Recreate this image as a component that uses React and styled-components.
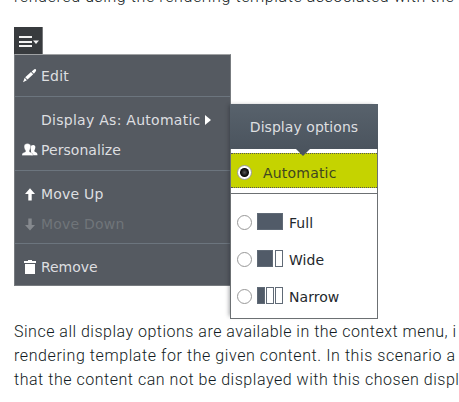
import React from "react";
import styled, { createGlobalStyle } from "styled-components";

const GlobalStyle = createGlobalStyle`
  html, body { margin: 0; background: #fff; overflow: hidden; }
  * { box-sizing: border-box; }
`;

const Page = styled.main`
  width: 459px;
  height: 402px;
  padding-left: 14px;
  overflow: hidden;
  background: #fff;
`;

const Paragraph = styled.div`
  height: ${(p) => p.$height}px;
  margin-top: ${(p) => p.$offset}px;
  padding-top: ${(p) => p.$top || 0}px;
  color: #111a22;
  font: 300 16px/24px Roboto, sans-serif;
`;

const Line = styled.div`
  height: 24px;
  white-space: nowrap;
  letter-spacing: ${(p) => p.$spacing}px;
`;

const Toggle = styled.button`
  display: flex;
  align-items: center;
  gap: 1px;
  width: 29px;
  height: 27px;
  margin: 0;
  padding: 2px 0 0 5px;
  border: 0;
  border-right: 1px solid #77797b;
  background: #383b3e;
`;

const MenuArea = styled.div`
  position: relative;
  width: 217px;
  height: 265px;
`;

const Menu = styled.nav`
  width: 217px;
  height: 232px;
  border: 1px solid #777b7f;
  border-top-color: #a0a2a4;
  background: #555a61;
  font: 14px/30px "DejaVu Sans", sans-serif;
`;

const Group = styled.div`
  height: ${(p) => p.$height}px;
  padding-top: ${(p) => p.$top}px;
  border-bottom: ${(p) => (p.$last ? "0" : "1px solid #6c757e")};
`;

const MenuItem = styled.div`
  display: flex;
  align-items: center;
  height: 30px;
  color: ${(p) => (p.$disabled ? "#70757a" : "#dedfe0")};
  white-space: nowrap;
  letter-spacing: ${(p) => p.$spacing ?? 0.2}px;
`;

const IconSlot = styled.span`
  display: flex;
  align-items: center;
  justify-content: center;
  width: 16px;
  height: 16px;
  margin: 0 3px 0 7px;
  color: ${(p) => (p.$disabled ? "#85898e" : "#fff")};
`;

const Submenu = styled.section`
  position: absolute;
  left: 216px;
  top: 50px;
  width: 148px;
  height: 215px;
  border: 1px solid #6c7073;
  background: #fff;
  box-shadow: -3px -1px 4px -2px rgba(25, 31, 38, 0.4);
  font: 14px/18px "DejaVu Sans", sans-serif;
`;

const SubmenuTitle = styled.header`
  position: relative;
  height: 45px;
  margin: -1px -1px 0;
  background: linear-gradient(#58626c, #4b545e);
  color: #dedfe0;
  line-height: 47px;
  text-align: center;
  letter-spacing: 0.05px;
`;

const Pointer = styled.svg`
  position: absolute;
  z-index: 1;
  left: 66px;
  top: 45px;
`;

const Option = styled.label`
  display: flex;
  align-items: center;
  height: 37px;
  padding-left: 6px;
  color: #24282d;
`;

const SelectedOption = styled(Option)`
  height: 35px;
  margin-top: 4px;
  border: 1px dotted #555;
  border-width: 1px 0;
  background: #c5d300;
  padding-top: 5px;
  color: #3f4720;
`;

const Radio = styled.span`
  display: flex;
  align-items: center;
  justify-content: center;
  width: 15px;
  height: 15px;
  margin-top: ${(p) => (p.$checked ? -2 : 0)}px;
  border: 1px solid #989898;
  border-radius: 50%;
  background: #fff;
  flex: none;
  &::after {
    content: "";
    width: 9px;
    height: 9px;
    border-radius: 50%;
    background: ${(p) => (p.$checked ? "radial-gradient(#555, #000 65%)" : "transparent")};
  }
`;

const OptionText = styled.span`
  margin-left: ${(p) => p.$gap}px;
  white-space: nowrap;
  letter-spacing: ${(p) => p.$spacing ?? 0.05}px;
`;

const Choices = styled.div`
  margin-top: 5px;
  padding-top: 10px;
  border-top: 1px solid #6c7073;
`;

const WidthIcon = styled.span`
  display: flex;
  justify-content: space-between;
  width: 26px;
  height: 17px;
  margin: -2px 0 0 5px;
`;

const WidthBlock = styled.span`
  width: ${(p) => p.$width}px;
  border: 1px solid #606a76;
  background: ${(p) => (p.$filled ? "#515b68" : "#fff")};
`;

const HamburgerIcon = () => (
  <>
    <svg width="13" height="13" viewBox="0 0 13 13" fill="#f3f3f3">
      <path d="M0 1h13v2H0zM0 6h13v2H0zM0 10h13v2H0z" />
    </svg>
    <svg width="6" height="4" viewBox="0 0 6 4" fill="#f3f3f3"><path d="M0 .5h6L3 4z" /></svg>
  </>
);

const Icon = ({ kind, disabled }) => (
  <IconSlot $disabled={disabled}>
    {kind === "edit" && (
      <svg width="16" height="16" viewBox="0 0 16 16" fill="currentColor">
        <path d="M3.2 9.2 9 4l2.2 2.3-5.7 5.2zM2.7 9.8 4.9 12.2 1 14.3zM9.7 3.4 12.3 1.2Q13.5.6 14 1.5 14.4 2.2 13.8 3.2L11.9 5.7z" />
      </svg>
    )}
    {kind === "people" && (
      <svg width="16" height="14" viewBox="0 0 16 14" fill="currentColor">
        <path d="M8.5 4.4C8.7 2.8 9.8 2 11.2 2s2.4 1 2.1 2.8c-.2 1.2-.5 2-.9 2.5v1.3l2.3 1.1q.8.5.8 2.5H9V8z" />
        <path d="M2.1 4C2 1.7 3.3.6 5.4.6s3.7 1.2 3.3 3.5c-.2 1.5-.8 2.6-1.2 3.3v1.4l2.6 1.3q1 .5 1 2.4H0q-.2-2 .8-2.4l2.7-1.3V7.4C2.8 6.7 2.3 5.5 2.1 4z" stroke="#555a61" strokeWidth=".3" />
      </svg>
    )}
    {(kind === "up" || kind === "down") && (
      <svg width="12" height="13" viewBox="0 0 12 13" fill="currentColor">
        <path d={kind === "up" ? "M6 .3 11 6H7.7v6.5H4.3V6H1z" : "M6 12.5 11 7H7.7V.5H4.3V7H1z"} />
      </svg>
    )}
    {kind === "trash" && (
      <svg width="14" height="16" viewBox="0 0 14 16" fill="currentColor">
        <path d="M5 1h4v1h4v2H1V2h4zM2 5h10v10H2z" />
      </svg>
    )}
  </IconSlot>
);

function DisplayOptions() {
  return (
    <Submenu>
      <SubmenuTitle>
        Display options
        <Pointer width="14" height="7" viewBox="0 0 14 7"><path d="M0 0h14L7 7z" fill="#4b545e" /></Pointer>
      </SubmenuTitle>
      <SelectedOption><Radio $checked /><OptionText $gap={11} $spacing={0.2}>Automatic</OptionText></SelectedOption>
      <Choices>
        <Option><Radio /><WidthIcon><WidthBlock $width={26} $filled /></WidthIcon><OptionText $gap={6}>Full</OptionText></Option>
        <Option><Radio /><WidthIcon><WidthBlock $width={16} $filled /><WidthBlock $width={8} /></WidthIcon><OptionText $gap={6}>Wide</OptionText></Option>
        <Option><Radio /><WidthIcon><WidthBlock $width={8} $filled /><WidthBlock $width={8} /><WidthBlock $width={8} /></WidthIcon><OptionText $gap={6}>Narrow</OptionText></Option>
      </Choices>
    </Submenu>
  );
}

export default function App() {
  return (
    <>
      <GlobalStyle />
      <Page>
        <Paragraph $height={42} $offset={-15}>
          <Line $spacing={0.6}>rendered using the rendering template associated with the</Line>
        </Paragraph>
        <Toggle aria-label="Content menu"><HamburgerIcon /></Toggle>
        <MenuArea>
          <Menu>
            <Group $height={42} $top={6}><MenuItem><Icon kind="edit" />Edit</MenuItem></Group>
            <Group $height={74} $top={8}>
              <MenuItem $spacing={0.27}><Icon />Display As: Automatic
                <svg width="10" height="12" viewBox="0 0 10 12"><path d="M4 1 10 6 4 11z" fill="#fff" /></svg>
              </MenuItem>
              <MenuItem $spacing={0.05}><Icon kind="people" />Personalize</MenuItem>
            </Group>
            <Group $height={73} $top={8}>
              <MenuItem><Icon kind="up" />Move Up</MenuItem>
              <MenuItem $disabled><Icon kind="down" disabled />Move Down</MenuItem>
            </Group>
            <Group $height={41} $top={8} $last><MenuItem $spacing={-0.05}><Icon kind="trash" />Remove</MenuItem></Group>
          </Menu>
          <DisplayOptions />
        </MenuArea>
        <Paragraph $height={83} $offset={0} $top={1}>
          <Line $spacing={0.5}>Since all display options are available in the context menu, i</Line>
          <Line $spacing={0.58}>rendering template for the given content. In this scenario a</Line>
          <Line $spacing={0.53}>that the content can not be displayed with this chosen displ</Line>
        </Paragraph>
      </Page>
    </>
  );
}
